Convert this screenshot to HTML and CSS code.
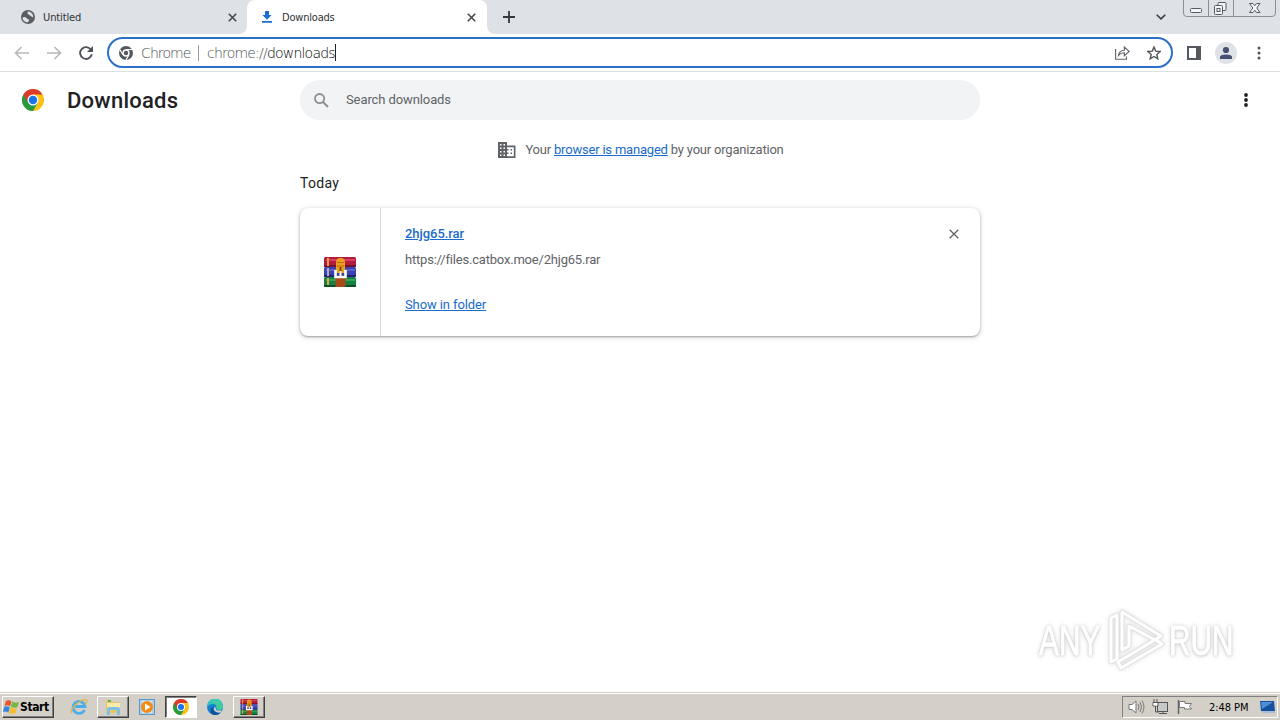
FILE: index.html
```html
<!DOCTYPE html>
<html lang="en">
<head>
<meta charset="utf-8">
<title>Downloads</title>
<link rel="stylesheet" href="styles.css">
</head>
<body>
<svg class="defs" width="0" height="0">
  <symbol id="chrome" viewBox="0 0 24 24">
    <circle cx="12" cy="12" r="12" fill="#fbc116"/>
    <path d="M12 12 1.6 6A12 12 0 0 0 12 24L17.2 15Z" fill="#249a41"/>
    <path d="M1.6 6A12 12 0 0 1 22.4 6H12L6.8 15Z" fill="#dc3a2c"/>
    <circle cx="12" cy="12" r="6" fill="#fff"/>
    <circle cx="12" cy="12" r="4.6" fill="#1a73e8"/>
  </symbol>
  <symbol id="rar" viewBox="0 0 32 30">
    <rect width="32" height="10" rx="1.5" fill="#b51b3c"/><path d="M2 3H31" stroke="#d8405f" stroke-width="2"/><path d="M0 9H32" stroke="#64102a" stroke-width="1.6"/>
    <rect y="10" width="32" height="10" rx="1.5" fill="#3a41b0"/><path d="M2 13H31" stroke="#5960cc" stroke-width="2"/><path d="M0 19H32" stroke="#1b1c62" stroke-width="1.6"/>
    <rect y="20" width="32" height="10" rx="1.5" fill="#158243"/><path d="M2 23H31" stroke="#35a458" stroke-width="2"/><path d="M0 29H32" stroke="#0a4420" stroke-width="1.6"/>
    <path d="M4 1V9M4 21V28" stroke="#e8a04a" stroke-width="2"/><path d="M4 11V19" stroke="#b9a8b8" stroke-width="2"/>
    <path d="M11.500 20H21.500V30H11.500Z" fill="#a94b18"/><path d="M12 16V5Q12 1 16.500 1T21 5V16Z" fill="#eda019"/><path d="M13 5.500H20M13 9H20" stroke="#b96910"/>
    <path d="M11.500 13V20H21.500V13" fill="none" stroke="#fff" stroke-width="2.600"/><path d="M16.500 10V15" stroke="#774516" stroke-width="2"/><path d="M16.500 14V20" stroke="#fff" stroke-width="2"/>
  </symbol>
</svg>
<header class="tabstrip">
  <div class="tab idle">
    <svg width="14" height="14" viewBox="0 0 14 14"><circle cx="7" cy="7" r="7" fill="#5a5e64"/><path d="M1.500 7.500Q4 6.500 5.500 8T8 9.500 6.500 12.500Q2 12 1.500 7.500ZM7 1.500Q5.500 3 7 4T9 5.500 12.200 7.500Q12.500 3 8 1.500Z" fill="#dee1e6"/></svg>
    <span>Untitled</span>
    <svg class="x" width="9" height="9" viewBox="0 0 9 9"><path d="M.8.8 8.200 8.200M8.200.8.8 8.200"/></svg>
  </div>
  <div class="tab active">
    <svg width="10" height="12" viewBox="0 0 10 12"><path d="M3 0H7V4H9.600L5 8.700.4 4H3ZM0 10H10V11.700H0Z" fill="#1a6fd0"/></svg>
    <span>Downloads</span>
    <svg class="x" width="9" height="9" viewBox="0 0 9 9"><path d="M.8.8 8.200 8.200M8.200.8.8 8.200"/></svg>
  </div>
  <div class="rest">
    <svg class="plus" width="12" height="12" viewBox="0 0 12 12"><path d="M6 0V12M0 6H12" stroke="#34373b" stroke-width="1.8"/></svg>
    <svg class="chev" width="10" height="6" viewBox="0 0 10 6"><path d="M.7.7 5 4.900 9.300.7" fill="none" stroke="#3c4043" stroke-width="1.6"/></svg>
    <svg class="winctl" width="94" height="17" viewBox="0 0 94 17"><path d="M.5 0V13Q.5 16.500 3.500 16.500H89Q92.500 16.500 92.500 13V0M25.500 0V16M50.500 0V16" fill="none" stroke="#898d95"/><g fill="#f4f5f8" stroke="#555a63"><rect x="7.500" y="8.500" width="11" height="4" rx="1"/><rect x="35" y="2.500" width="8" height="8" rx="1"/><rect x="31.500" y="5.500" width="8" height="9" rx="1"/><rect x="34" y="8.500" width="3" height="3"/><path d="M66.500 3.500H70L71.800 5.700 73.500 3.500H77L73.700 8 77 12.500H73.500L71.800 10.300 70 12.500H66.500L69.900 8Z"/></g></svg>
  </div>
</header>
<nav class="toolbar">
  <svg class="arrow" width="15" height="14" viewBox="0 0 15 14"><path d="M15 7H1.500M7.500 1 1.500 7 7.500 13"/></svg>
  <svg class="arrow" width="15" height="14" viewBox="0 0 15 14"><path d="M0 7H13.500M7.500 1 13.500 7 7.500 13"/></svg>
  <svg class="reload" width="14" height="14" viewBox="0 0 14 14"><path d="M12 3.800A5.900 5.900 0 1 0 12.800 8.300" fill="none" stroke="#4f5359" stroke-width="1.900"/><path d="M14 0V6H8Z" fill="#4f5359"/></svg>
  <div class="omnibox">
    <svg width="14" height="14" viewBox="0 0 24 24"><circle cx="12" cy="12" r="12" fill="#55595f"/><circle cx="12" cy="12" r="5" fill="#55595f" stroke="#fff" stroke-width="2.500"/><path d="M12 6H23M6.800 15 1.500 6M17.200 15 12 24" stroke="#fff" stroke-width="2"/></svg>
    <span class="scheme">Chrome</span><i></i><span class="url">chrome://<b>downloads</b></span><em></em>
    <svg class="share" width="15" height="14" viewBox="0 0 15 14"><path d="M.6 3V13.300H11.500V10.500M3.500 9.500Q4.200 4.400 9.300 4.200V1L14.200 5.500 9.300 9.700V6.800Q5.600 6.700 3.500 9.500Z" fill="none" stroke="#5f6368" stroke-width="1.100"/></svg>
    <svg width="14" height="14" viewBox="0 0 14 14"><path d="M7 1 8.700 5.100 13.200 5.500 9.800 8.400 10.800 12.800 7 10.500 3.200 12.800 4.200 8.400.8 5.500 5.300 5.100Z" fill="none" stroke="#4f5359" stroke-width="1.400"/></svg>
  </div>
  <svg class="panel" width="14" height="14" viewBox="0 0 14 14"><path d="M1 1H13V13H1Z" fill="#fff" stroke="#55585d" stroke-width="2"/><path d="M9 0H14V14H9Z" fill="#55585d"/></svg>
  <svg class="avatar" width="22" height="22" viewBox="0 0 22 22"><circle cx="11" cy="11" r="11" fill="#dfe2e7"/><circle cx="11" cy="8" r="3.100" fill="#465171"/><path d="M5 17V15Q5 12.500 11 12.500T17 15V17Z" fill="#465171"/></svg>
  <svg class="dots" width="4" height="14" viewBox="0 0 4 14"><g fill="#4f5359"><circle cx="2" cy="2" r="1.500"/><circle cx="2" cy="7" r="1.500"/><circle cx="2" cy="12" r="1.500"/></g></svg>
</nav>
<main>
  <div class="top">
    <div class="brand"><svg width="22" height="22"><use href="#chrome"/></svg><h1>Downloads</h1></div>
    <div class="search"><svg width="15" height="15" viewBox="0 0 15 15"><circle cx="5.600" cy="5.600" r="4.600" fill="none" stroke="#8b8f94" stroke-width="1.800"/><path d="M9 9 14 14" stroke="#8b8f94" stroke-width="2"/></svg><span>Search downloads</span></div>
    <svg class="more" width="4" height="14" viewBox="0 0 4 14"><g fill="#202124"><circle cx="2" cy="2" r="1.900"/><circle cx="2" cy="7" r="1.900"/><circle cx="2" cy="12" r="1.900"/></g></svg>
  </div>
  <div class="managed">
    <svg width="18" height="16" viewBox="0 0 18 16"><path d="M0 0H9V3.500H17.500V16H0Z" fill="#5f6368"/><path d="M2 2H3.500V3.500H2ZM5.500 2H7V3.500H5.500ZM2 5.500H3.500V7H2ZM5.500 5.500H7V7H5.500ZM2 9H3.500V10.500H2ZM5.500 9H7V10.500H5.500ZM2 12.500H3.500V14H2ZM5.500 12.500H7V14H5.500ZM9 5.300H15.800V14.300H9Z" fill="#fff"/><path d="M9 7H10.500V8.500H9ZM12.500 7H14V8.500H12.500ZM9 10.500H10.500V12H9ZM12.500 10.500H14V12H12.500Z" fill="#5f6368"/></svg>
    <p>Your <a>browser is managed</a> by your organization</p>
  </div>
  <h2>Today</h2>
  <section class="card">
    <div class="fileicon"><svg width="32" height="30"><use href="#rar"/></svg></div>
    <div class="info"><a class="name">2hjg65.rar</a><p>https://files.catbox.moe/2hjg65.rar</p><a class="show">Show in folder</a></div>
    <svg class="dismiss" width="10" height="10" viewBox="0 0 10 10"><path d="M.7.7 9.300 9.300M9.300.7.7 9.300" stroke="#5f6368" stroke-width="1.300"/></svg>
  </section>
  <div class="mark">
    <span class="any">ANY</span>
    <svg width="58" height="66" viewBox="0 0 58 66"><g fill="none" stroke-linejoin="round" stroke-linecap="round"><path d="M10 8 4 11V55L10 52V8M15 5V43L22 39V19L48 33 54 29 15 5M14 61 55 37 49 33M14 61 11 55 46 34" stroke="#dedede" stroke-width="4.500"/><path d="M10 8 4 11V55L10 52V8M15 5V43L22 39V19L48 33 54 29 15 5M14 61 55 37 49 33M14 61 11 55 46 34" stroke="#fff" stroke-width="3"/></g></svg>
    <span class="run">RUN</span>
  </div>
</main>
<footer class="taskbar">
  <div class="start"><svg width="17" height="16" viewBox="0 0 17 16"><path d="M3 2Q6 .5 8.500 2.500L7 7.500Q4.500 5.500 1.500 7Z" fill="#e8562a"/><path d="M9.500 2.500Q12 4.500 16 3L14.500 8Q11 9.500 7.700 7.800Z" fill="#76b843"/><path d="M1.200 7.800Q4 6.500 6.800 8.300L5.300 13.500Q3 11.800 0 13Z" fill="#3785d8"/><path d="M7.500 8.600Q11 10.300 14 9L12.500 14.200Q9 15.500 6 14Z" fill="#f7bd2e"/></svg><span>Start</span></div>
  <div class="task flat ie"><svg width="18" height="18" viewBox="0 0 18 18"><path d="M14.500 12A6 6 0 1 1 15 8.500H5" fill="none" stroke="#4aaee8" stroke-width="2.800"/><path d="M2 15Q-1 13 6 6.500T16.500 2Q18 3 15 6.500" fill="none" stroke="#e3b44a" stroke-width="1.300"/></svg></div>
  <div class="task"><svg width="18" height="18" viewBox="0 0 18 18"><path d="M2 2H7L8 4H15V15H2Z" fill="#e9c565"/><path d="M3 5H16V12H3Z" fill="#fbeaa8"/><path d="M3 17V11Q3 9 5 9H14Q16 9 16 11V17H13V12H6V17Z" fill="#7fc1e5"/><path d="M4 3H7" stroke="#60b45a" stroke-width="2"/></svg></div>
  <div class="task flat wmp"><svg width="16" height="16" viewBox="0 0 16 16"><rect x=".5" y=".5" width="15" height="15" fill="#aad1ee" stroke="#5a97c7"/><rect x="3" y="2" width="10" height="12" fill="#d5e8f7"/><circle cx="8" cy="8" r="6" fill="#f38b14"/><path d="M6 4.500 11.500 8 6 11.500Z" fill="#fff"/></svg></div>
  <div class="task pressed"><svg width="16" height="16"><use href="#chrome"/></svg></div>
  <div class="task flat edge"><svg width="16" height="16" viewBox="0 0 16 16"><circle cx="8" cy="8" r="8" fill="#1683cd"/><path d="M0 8A8 8 0 0 1 16 7Q16 11 11.500 11 9 11 9.500 9 10 5 6 5 2 5 0 8Z" fill="#35c3c3"/><path d="M7 1A8 8 0 0 1 16 7Q16 11 11.500 11L9.500 10Q10 4 3 2.500Z" fill="#48cf90" opacity=".7"/><path d="M6.500 8Q5 11 8.500 13T14.500 12.500Q12 16 8 16 3 15.500 3.500 11 4 8 6.500 8Z" fill="#105299"/><path d="M8 8.500Q7 12 11 12.500H14.500" fill="none" stroke="#d4d0c8" stroke-width="1.800"/></svg></div>
  <div class="task"><svg width="18" height="16"><use href="#rar"/></svg></div>
  <div class="tray">
    <svg width="17" height="16" viewBox="0 0 17 16"><path d="M1 5.500H4L8 2V14L4 10.500H1Z" fill="#fff" stroke="#777"/><path d="M10 5Q12 8 10 11M12 3Q15 8 12 13M14 1.500Q18 8 14 14.500" fill="none" stroke="#777"/></svg>
    <svg width="17" height="16" viewBox="0 0 17 16"><rect x="5.500" y="3.500" width="10" height="9" fill="#c8c8c8" stroke="#555"/><path d="M7 14.500H15M11 12V15M2 0V4M5 0V4M1 3.500H6V7H1ZM3.500 7V13H7" fill="none" stroke="#555"/><path d="M1.500 4H5.500V6.500H1.500Z" fill="#fff"/></svg>
    <svg width="17" height="16" viewBox="0 0 17 16"><path d="M2.500 1V15" stroke="#666" stroke-width="1.500"/><path d="M3.500 2.500H9V4.500H15.500L13.500 7.500 15.500 10H8.500V8.500H3.500Z" fill="#fff" stroke="#777"/></svg>
    <time>2:48 PM</time>
    <svg width="15" height="13" viewBox="0 0 15 13"><path d="M0 0H14L15 10H1Z" fill="#1650a0"/><path d="M1 1H13L2 8Z" fill="#4c91d5"/><path d="M1 10H15V12H3Z" fill="#a8bdd4"/></svg>
  </div>
</footer>
</body>
</html>
```
FILE: styles.css
```css
* { box-sizing: border-box; }
body { margin: 0; width: 1280px; height: 720px; overflow: hidden; display: flex; flex-direction: column; background: #fff; font-family: Roboto, sans-serif; color: #202124; }
svg { display: block; flex: none; }
.defs { position: absolute; }
h1, h2, p { margin: 0; font-weight: 400; }
span, a, p, h1, h2, time { white-space: nowrap; }

.tabstrip { height: 34px; background: linear-gradient(#dee1e6 50%, #fff 50%); display: flex; align-items: center; flex: none; font: 11px/14px "DejaVu Sans Condensed", "DejaVu Sans", sans-serif; }
.tab { height: 34px; display: flex; align-items: center; }
.idle { width: 247px; padding: 0 10.500px 0 21px; gap: 8px; border-radius: 0 0 8px 0; background: #dee1e6; }
.active { width: 240px; padding: 0 11.500px 0 15px; gap: 10px; background: #fff; border-radius: 8px 8px 0 0; }
.tab span { color: #303336; padding-top: 1px; }
.idle span { letter-spacing: -.12px; }
.active span { letter-spacing: -.2px; }
.tab .x { margin-left: auto; stroke: #45484c; stroke-width: 1.6; }
.rest { flex: 1; height: 34px; display: flex; align-items: center; background: #dee1e6; border-radius: 0 0 0 8px; }
.plus { margin-left: 16px; }
.chev { margin-left: auto; }
.winctl { margin-left: 17px; margin-right: 3px; align-self: flex-start; }

.toolbar { height: 38px; border-bottom: 1px solid #dcdee1; display: flex; align-items: center; padding: 0 19px 0 14px; flex: none; }
.arrow { fill: none; stroke: #b6b8ba; stroke-width: 1.6; margin-right: 17px; }
.arrow + .arrow { margin-left: 1px; }
.reload { margin-right: 14px; }
.omnibox { width: 1067px; height: 31px; border: 2px solid #2b6fc6; border-radius: 16px; display: flex; align-items: center; padding: 0 10px; font: 200 14px/20px "DejaVu Sans", sans-serif; color: #484c50; }
.scheme { margin-left: 8px; width: 49px; letter-spacing: -.9px; }
.omnibox i { width: 1px; height: 16px; background: #9a9da1; margin: 0 8px; }
.url { width: 128px; letter-spacing: -.79px; }
.url b { font-weight: 200; color: #000; }
.omnibox em { width: 1px; height: 17px; background: #202124; }
.share { margin-left: auto; margin-right: 17px; }
.panel { margin-left: 14px; }
.avatar { margin-left: 14px; }
.dots { margin-left: 20px; }

main { flex: 1; display: flex; flex-direction: column; }
.top { display: flex; align-items: center; padding-top: 8px; }
.brand { width: 300px; display: flex; align-items: center; padding-left: 22px; gap: 23px; }
h1 { font: 500 22px/30px Roboto, sans-serif; letter-spacing: .25px; padding-top: 1px; }
.search { width: 680px; height: 40px; border-radius: 20px; background: #f1f3f4; display: flex; align-items: center; padding-left: 14px; gap: 17px; font-size: 13px; color: #5f6368; letter-spacing: -.1px; }
.search span { padding-bottom: 2px; }
.more { margin-left: 264px; }
.managed { display: flex; align-items: center; justify-content: center; gap: 9px; padding-left: 2px; margin-top: 20px; height: 20px; font-size: 13px; color: #5f6368; letter-spacing: -.2px; }
.managed p { padding-bottom: 2px; }
a { color: #1a6bcb; text-decoration: underline; }
h2 { margin: 13px 0 0 300px; font-size: 14px; line-height: 20px; letter-spacing: .3px; }
.card { margin: 15px 0 0 300px; width: 680px; height: 128px; border-radius: 8px; box-shadow: 0 1px 2px rgba(60,64,67,.4), 0 1px 4px 1px rgba(60,64,67,.16); display: flex; font-size: 13px; line-height: 20px; }
.fileicon { width: 81px; border-right: 1px solid #d9dbde; display: flex; align-items: center; justify-content: center; }
.info { padding: 16px 0 0 24px; display: flex; flex-direction: column; align-items: flex-start; flex: 1; }
.info p { color: #5f6368; margin: 6px 0 25px; letter-spacing: -.2px; }
.name { font-weight: 500; letter-spacing: -.05px; }
.show { letter-spacing: -.1px; }
.dismiss { margin: 21px 21px 0 0; }
.mark { margin: auto 46px 19px auto; height: 66px; display: flex; align-items: center; color: #fff; font: 42px/60px "Liberation Sans", sans-serif; text-shadow: 0 0 2px #bbb, 0 1px 3px #ccc; filter: drop-shadow(0 0 2px #ddd); -webkit-text-stroke: 1px #fff; }
.mark span { display: block; width: 65px; padding-top: 2px; transform-origin: left center; transform: scaleX(.71); }
.mark .any { width: 68px; }
.mark svg { margin-right: 4px; }

.taskbar { height: 28px; border-top: 1px solid #d4d0c8; box-shadow: inset 0 1px #fff; background: #d4d0c8; display: flex; align-items: center; padding: 1px 2px 0; flex: none; font: 11px/16px "DejaVu Sans Condensed", "DejaVu Sans", sans-serif; color: #000; }
.start { width: 52px; height: 22px; display: flex; align-items: center; gap: 0; font-weight: 700; font-size: 12px; letter-spacing: -.4px; margin-right: 9px; }
.start, .task { border: 1px solid; border-color: #fff #404040 #404040 #fff; box-shadow: inset -1px -1px #808080; }
.task { width: 32px; height: 22px; display: flex; align-items: center; justify-content: center; margin-right: 2px; }
.flat { border-color: transparent; box-shadow: none; }
.pressed { background: #fff; border-color: #404040 #fff #fff #404040; box-shadow: inset 1px 1px #808080; }
.tray { margin-left: auto; width: 156px; height: 22px; border: 1px solid; border-color: #808080 #fff #fff #808080; display: flex; align-items: center; padding: 0 2px 0 5px; gap: 7px; }
.tray time { width: 42px; letter-spacing: -.05px; padding-top: 1px; margin: 0 2px 0 9px; }
```
